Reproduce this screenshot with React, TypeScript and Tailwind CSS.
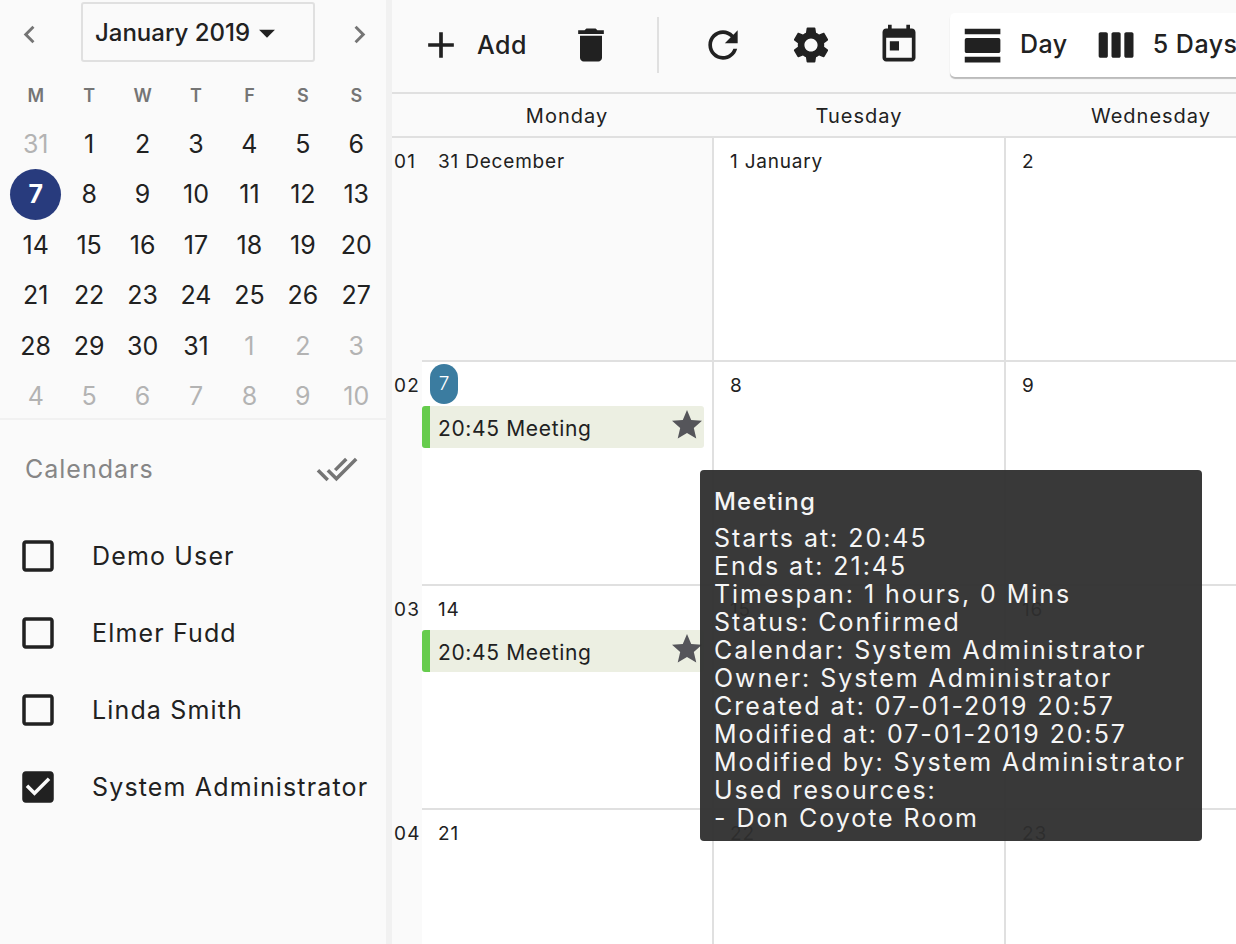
import { ReactNode } from "react";

const ICONS = {
  add: "M19 13h-6v6h-2v-6H5v-2h6V5h2v6h6v2z",
  trash: "M6 19c0 1.1.9 2 2 2h8c1.1 0 2-.9 2-2V7H6v12zM19 4h-3.5l-1-1h-5l-1 1H5v2h14V4z",
  refresh:
    "M17.65 6.35C16.2 4.9 14.21 4 12 4c-4.42 0-7.99 3.58-7.99 8s3.57 8 7.99 8c3.73 0 6.84-2.55 7.73-6h-2.08c-.82 2.33-3.04 4-5.65 4-3.31 0-6-2.69-6-6s2.69-6 6-6c1.66 0 3.14.69 4.22 1.78L13 11h7V4l-2.35 2.35z",
  settings:
    "M19.14 12.94c.04-.3.06-.61.06-.94 0-.32-.02-.64-.07-.94l2.03-1.58c.18-.14.23-.41.12-.61l-1.92-3.32c-.12-.22-.37-.29-.59-.22l-2.39.96c-.5-.38-1.03-.7-1.62-.94l-.36-2.54c-.04-.24-.24-.41-.48-.41h-3.84c-.24 0-.43.17-.47.41l-.36 2.54c-.59.24-1.13.57-1.62.94l-2.39-.96c-.22-.08-.47 0-.59.22L2.74 8.87c-.12.21-.08.47.12.61l2.03 1.58c-.05.3-.09.63-.09.94s.02.64.07.94l-2.03 1.58c-.18.14-.23.41-.12.61l1.92 3.32c.12.22.37.29.59.22l2.39-.96c.5.38 1.03.7 1.62.94l.36 2.54c.05.24.24.41.48.41h3.84c.24 0 .44-.17.47-.41l.36-2.54c.59-.24 1.13-.56 1.62-.94l2.39.96c.22.08.47 0 .59-.22l1.92-3.32c.12-.22.07-.47-.12-.61l-2.01-1.58zM12 15.6c-1.98 0-3.6-1.62-3.6-3.6s1.62-3.6 3.6-3.6 3.6 1.62 3.6 3.6-1.62 3.6-3.6 3.6z",
  today:
    "M19 3h-1V1h-2v2H8V1H6v2H5c-1.11 0-1.99.9-1.99 2L3 19c0 1.1.89 2 2 2h14c1.1 0 2-.9 2-2V5c0-1.1-.9-2-2-2zm0 16H5V8h14v11zM7 10h5v5H7z",
  viewDay:
    "M2 21h19v-3H2v3zM20 8H3c-.55 0-1 .45-1 1v6c0 .55.45 1 1 1h17c.55 0 1-.45 1-1V9c0-.55-.45-1-1-1zM2 3v3h19V3H2z",
  viewWeek:
    "M6 5H3c-.55 0-1 .45-1 1v12c0 .55.45 1 1 1h3c.55 0 1-.45 1-1V6c0-.55-.45-1-1-1zm14 0h-3c-.55 0-1 .45-1 1v12c0 .55.45 1 1 1h3c.55 0 1-.45 1-1V6c0-.55-.45-1-1-1zm-7 0h-3c-.55 0-1 .45-1 1v12c0 .55.45 1 1 1h3c.55 0 1-.45 1-1V6c0-.55-.45-1-1-1z",
  doneAll:
    "M18 7l-1.41-1.41-6.34 6.34 1.41 1.41L18 7zm4.24-1.41L11.66 16.17 7.48 12l-1.41 1.41L11.66 19l12-12-1.42-1.41zM.41 13.41L6 19l1.41-1.41L1.83 12 .41 13.41z",
  star: "M12 17.27L18.18 21l-1.64-7.03L22 9.24l-7.19-.61L12 2 9.19 8.63 2 9.24l5.46 4.73L5.82 21z",
  boxEmpty:
    "M19 5v14H5V5h14m0-2H5c-1.1 0-2 .9-2 2v14c0 1.1.9 2 2 2h14c1.1 0 2-.9 2-2V5c0-1.1-.9-2-2-2z",
  boxChecked:
    "M19 3H5c-1.11 0-2 .9-2 2v14c0 1.1.89 2 2 2h14c1.11 0 2-.89 2-2V5c0-1.1-.89-2-2-2zm-9 14l-5-5 1.41-1.41L10 14.17l7.59-7.59L19 8l-9 9z",
  caret: "M7 10l5 5 5-5z",
  left: "M15.41 7.41L14 6l-6 6 6 6 1.41-1.41L10.83 12z",
  right: "M10 6L8.59 7.41 13.17 12l-4.58 4.59L10 18l6-6z",
};

function Icon({ name, className }: { name: keyof typeof ICONS; className: string }) {
  return (
    <svg viewBox="0 0 24 24" fill="currentColor" className={className}>
      <path d={ICONS[name]} />
    </svg>
  );
}

const weeks = [
  [31, 1, 2, 3, 4, 5, 6],
  [7, 8, 9, 10, 11, 12, 13],
  [14, 15, 16, 17, 18, 19, 20],
  [21, 22, 23, 24, 25, 26, 27],
  [28, 29, 30, 31, 1, 2, 3],
  [4, 5, 6, 7, 8, 9, 10],
];

function MiniCalendar() {
  return (
    <div className="h-[420px] border-b-2 border-[#f1f1f1]">
      <div className="flex h-[79px] items-start">
        <div className="flex h-[68px] w-[58px] shrink-0 items-center justify-center text-[#757575]">
          <Icon name="left" className="h-[35px] w-[35px]" />
        </div>
        <div className="mt-[2px] ml-[23px] flex h-[60px] w-[234px] shrink-0 items-center rounded-[3px] border-2 border-[#e0e0e0] pl-[12px] text-[24px] font-medium text-[#212121]">
          <span className="translate-y-[1px]">January 2019</span>
          <Icon name="caret" className="-ml-[2px] h-[38px] w-[38px] translate-y-[1px]" />
        </div>
        <div className="ml-[15px] flex h-[68px] w-[58px] shrink-0 items-center justify-center text-[#757575]">
          <Icon name="right" className="h-[35px] w-[35px]" />
        </div>
      </div>
      <div className="ml-[9px] grid w-[374px] grid-cols-7">
        {["M", "T", "W", "T", "F", "S", "S"].map((d, i) => (
          <div key={i} className="flex h-[40px] items-start justify-center text-[18px] leading-[34px] font-semibold text-[#757575]">
            {d}
          </div>
        ))}
        {weeks.map((week, w) =>
          week.map((day, i) => {
            const muted = (w === 0 && day > 7) || (w === 4 && day < 7) || w === 5;
            const today = w === 1 && i === 0;
            return (
              <div key={`${w}-${i}`} className="flex h-[50.4px] items-center justify-center text-[25px]">
                {today ? (
                  <span className="flex h-[51px] w-[51px] items-center justify-center rounded-full bg-[#283b7d] font-bold text-white">
                    {day}
                  </span>
                ) : (
                  <span className={`pt-[1px] ${muted ? "text-[#b3b3b3]" : "text-[#212121]"}`}>{day}</span>
                )}
              </div>
            );
          }),
        )}
      </div>
    </div>
  );
}

function CalendarList() {
  const rows = [
    { name: "Demo User", on: false },
    { name: "Elmer Fudd", on: false },
    { name: "Linda Smith", on: false },
    { name: "System Administrator", on: true },
  ];
  return (
    <div>
      <div className="flex h-[97px] items-center justify-between pr-[28px] pl-[25px]">
        <span className="pt-[2px] text-[25px] tracking-[1px] text-[#868686]">Calendars</span>
        <Icon name="doneAll" className="h-[42px] w-[42px] text-[#757575]" />
      </div>
      <div>
        {rows.map((r) => (
          <div key={r.name} className="flex h-[77px] items-center pl-[17px]">
            <Icon name={r.on ? "boxChecked" : "boxEmpty"} className="h-[42px] w-[42px] text-[#212121]" />
            <span className="ml-[33px] pt-[2px] text-[25px] tracking-[1.15px] whitespace-nowrap text-[#212121]">
              {r.name}
            </span>
          </div>
        ))}
      </div>
    </div>
  );
}

function ToolIcon({ name }: { name: keyof typeof ICONS }) {
  return (
    <div className="flex w-[88px] shrink-0 justify-center text-[#212121]">
      <Icon name={name} className="h-[44px] w-[44px]" />
    </div>
  );
}

function Toolbar() {
  return (
    <div className="flex h-[94px] shrink-0 items-center border-b-2 border-[#e0e0e0] pb-[2px]">
      <div className="flex w-[155px] shrink-0 items-center pl-[27px] text-[#212121]">
        <Icon name="add" className="-mt-[1px] h-[44px] w-[44px]" />
        <span className="mt-[1px] ml-[14px] text-[25px] font-medium tracking-[0.5px]">Add</span>
      </div>
      <ToolIcon name="trash" />
      <div className="ml-[22px] h-[56px] w-[2px] shrink-0 bg-[#e0e0e0]" />
      <div className="ml-[20px] flex shrink-0">
        <ToolIcon name="refresh" />
        <ToolIcon name="settings" />
        <ToolIcon name="today" />
      </div>
      <div className="ml-[7px] flex h-[64px] grow items-center rounded-l-[5px] bg-white pl-[11px] whitespace-nowrap text-[#212121] shadow-[0_2px_1px_rgba(0,0,0,0.25)]">
        <Icon name="viewDay" className="h-[45px] w-[45px] shrink-0" />
        <span className="ml-[14px] text-[25px] font-medium tracking-[0.5px]">Day</span>
        <Icon name="viewWeek" className="ml-[27px] h-[44px] w-[44px] shrink-0" />
        <span className="ml-[14px] text-[25px] font-medium tracking-[0.5px]">5 Days</span>
      </div>
    </div>
  );
}

function Meeting() {
  return (
    <div className="flex h-[42px] w-[282px] items-center rounded-[3px] border-l-[8px] border-[#66cc4d] bg-[#ecefe2] pl-[8px] text-[#212121]">
      <span className="translate-y-[2px] text-[21px] tracking-[0.65px]">20:45 Meeting</span>
      <Icon name="star" className="-mr-[1px] ml-auto h-[36px] w-[36px] -translate-y-[2px] text-[#55555a]" />
    </div>
  );
}

function DayCell({ label, muted, children }: { label?: string; muted?: boolean; children?: ReactNode }) {
  return (
    <div className={`border-r-2 border-b-2 border-[#e0e0e0] ${muted ? "bg-[#fafafa]" : "bg-white"}`}>
      {label && (
        <div className="h-[44px] pt-[10px] pl-[16px] text-[19px] leading-[27px] tracking-[0.8px] text-[#212121]">
          {label}
        </div>
      )}
      {children}
    </div>
  );
}

function Grid() {
  const rows = [
    { week: "01", days: ["31 December", "1 January", "2"] },
    { week: "02", days: ["", "8", "9"] },
    { week: "03", days: ["14", "15", "16"] },
    { week: "04", days: ["21", "22", "23"] },
  ];
  return (
    <div className="grid grow grid-cols-[30px_292px_292px_292px] grid-rows-[224px_224px_224px_224px] overflow-hidden">
      {rows.map((row, r) => (
        <div key={row.week} className="contents">
          <div className="bg-[#fafafa] pt-[10px] pl-[2px] text-[19px] leading-[27px] tracking-[1.2px] text-[#212121]">
            {row.week}
          </div>
          {row.days.map((d, i) => (
            <DayCell key={i} label={d || undefined} muted={r === 0 && i === 0}>
              {r === 1 && i === 0 && (
                <>
                  <div className="mt-[2px] mb-[2px] ml-[8px] flex h-[40px] w-[28px] items-center justify-center rounded-[14px] bg-[#3b7ca0] text-[19px] font-light text-white">
                    7
                  </div>
                  <Meeting />
                </>
              )}
              {r === 2 && i === 0 && <Meeting />}
            </DayCell>
          ))}
        </div>
      ))}
    </div>
  );
}

function Tooltip() {
  const lines = [
    "Starts at: 20:45",
    "Ends at: 21:45",
    "Timespan: 1 hours, 0 Mins",
    "Status: Confirmed",
    "Calendar: System Administrator",
    "Owner: System Administrator",
    "Created at: 07-01-2019 20:57",
    "Modified at: 07-01-2019 20:57",
    "Modified by: System Administrator",
    "Used resources:",
    "- Don Coyote Room",
  ];
  return (
    <div className="absolute top-[470px] left-[700px] h-[371px] w-[502px] rounded-[4px] bg-[#2e2e2e]/95 px-[14px] pt-[18px] text-[#f5f5f5]">
      <div className="mb-[8px] text-[24px] leading-[28px] font-medium tracking-[1.2px]">Meeting</div>
      {lines.map((l) => (
        <div key={l} className="text-[25px] leading-[28px] tracking-[1.95px] whitespace-nowrap">
          {l}
        </div>
      ))}
    </div>
  );
}

export default function App() {
  return (
    <div className="relative flex h-[944px] w-[1236px] overflow-hidden bg-white font-['Inter',sans-serif]">
      <aside className="w-[386px] shrink-0 bg-[#fafafa]">
        <MiniCalendar />
        <CalendarList />
      </aside>
      <div className="w-[6px] shrink-0 bg-[#f1f1f1]" />
      <main className="flex min-w-0 grow flex-col bg-[#fafafa]">
        <Toolbar />
        <div className="grid h-[44px] shrink-0 grid-cols-[30px_292px_292px_292px] border-b-2 border-[#e0e0e0] pt-[2px] text-[20px] tracking-[1px] text-[#212121]">
          <div />
          {["Monday", "Tuesday", "Wednesday"].map((d) => (
            <div key={d} className="-ml-[2px] flex items-center justify-center">
              {d}
            </div>
          ))}
        </div>
        <Grid />
      </main>
      <Tooltip />
    </div>
  );
}
